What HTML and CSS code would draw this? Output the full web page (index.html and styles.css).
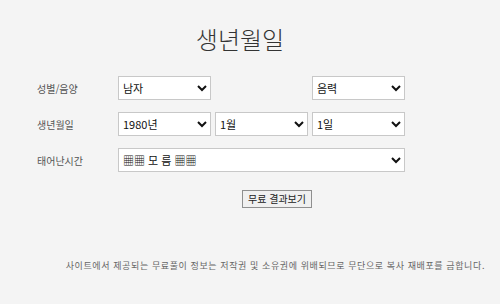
FILE: index.html
```html
<!DOCTYPE html>
<html lang="ko">
<head>
<meta charset="utf-8">
<link rel="stylesheet" href="styles.css">
</head>
<body>
<div class="page">
  <h1 class="title">생년월일</h1>
  <div class="form">
    <div class="row">
      <span class="label">성별/음양</span>
      <div class="fields">
        <select class="sel"><option>남자</option><option>여자</option></select>
        <span class="blank"></span>
        <select class="sel"><option>음력</option><option>양력</option></select>
      </div>
    </div>
    <div class="row">
      <span class="label">생년월일</span>
      <div class="fields">
        <select class="sel"><option>1980년</option></select>
        <select class="sel"><option>1월</option></select>
        <select class="sel"><option>1일</option></select>
      </div>
    </div>
    <div class="row">
      <span class="label">태어난시간</span>
      <div class="fields">
        <select class="sel wide"><option>▦▦ 모 름 ▦▦</option></select>
      </div>
    </div>
    <div class="actions">
      <button class="btn" type="button">무료 결과보기</button>
    </div>
  </div>
  <p class="notice">사이트에서 제공되는 무료풀이 정보는 저작권 및 소유권에 위배되므로 무단으로 복사 재배포를 금합니다.</p>
</div>
</body>
</html>
```
FILE: styles.css
```css
html, body {
  margin: 0;
  padding: 0;
  background: #f4f4f4;
}
body {
  font-family: "Noto Sans CJK KR", "Noto Sans", sans-serif;
  color: #333;
}
.page {
  width: 500px;
  height: 304px;
  padding-top: 22px;
  box-sizing: border-box;
}
.title {
  margin: 0;
  text-align: center;
  font-size: 24px;
  line-height: 34px;
  font-weight: 300;
  color: #333;
  padding-right: 20px;
}
.form {
  margin-top: 20px;
}
.row {
  display: flex;
  align-items: center;
  height: 24px;
  margin-bottom: 12px;
}
.label {
  width: 81px;
  padding-left: 37px;
  font-size: 10px;
  color: #555;
  flex: none;
}
.fields {
  display: grid;
  grid-template-columns: 93px 93px 93px;
  column-gap: 4px;
}
.sel {
  height: 24px;
  border: 1px solid #c8c8c8;
  border-radius: 0;
  background: #fff;
  font-family: "Noto Sans CJK KR", sans-serif;
  font-size: 11px;
  color: #111;
  padding: 0;
  margin: 0;
  box-sizing: border-box;
  width: 100%;
}
.blank {
  display: block;
}
.wide {
  grid-column: 1 / 4;
  font-size: 11px;
}
.actions {
  padding-left: 242px;
  margin-top: 5px;
}
.btn {
  height: 18px;
  padding: 0 5px;
  border: 1px solid #8f8f8f;
  background: #f0f0f0;
  font-family: "Noto Sans CJK KR", sans-serif;
  font-size: 10px;
  line-height: 14px;
  color: #222;
  border-radius: 0;
}
.notice {
  margin: 51px 0 0;
  padding-right: 15px;
  text-align: right;
  font-size: 9px;
  color: #666;
  letter-spacing: 0.6px;
}
```
